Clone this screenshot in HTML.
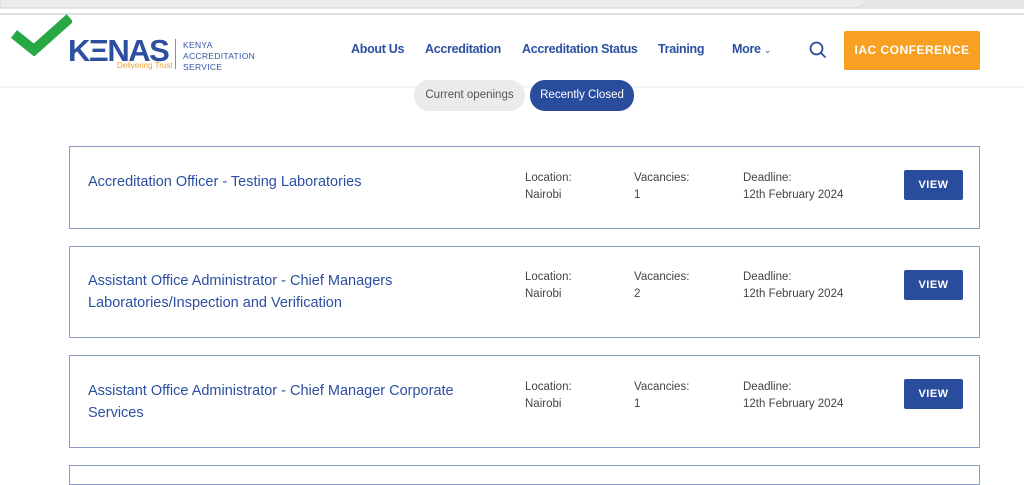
<!DOCTYPE html>
<html><head><meta charset="utf-8"><style>
*{margin:0;padding:0;box-sizing:border-box}
body{width:1024px;height:466px;overflow:hidden;background:#fff;font-family:"Liberation Sans",Arial,sans-serif;position:relative}
.abs{position:absolute}
.nav a{position:absolute;top:42px;font-size:12.5px;color:#2c4fa0;font-weight:bold;letter-spacing:-0.3px;white-space:nowrap}
.card{position:absolute;left:69px;width:911px;border:1px solid #8c9cc6;background:#fff}
.title{position:absolute;left:18px;font-size:14.5px;color:#2c4fa0;line-height:22px}
.lab{position:absolute;font-size:11.5px;color:#444;line-height:17px}
.view{position:absolute;left:834px;width:59px;height:30px;background:#2a4c9c;color:#fff;font-size:11px;font-weight:bold;text-align:center;line-height:30px;border-radius:2px;letter-spacing:.5px}
</style></head><body>
<div class="abs" style="left:0;top:0;width:1024px;height:9px;background:#e6e6e6"></div>
<div class="abs" style="left:0;top:-10px;width:868px;height:18px;background:#ececec;border-radius:0 0 12px 0;border:1px solid #ddd"></div>
<div class="abs" style="left:0;top:13px;width:1024px;height:2px;background:#ddd"></div>
<div class="abs" style="left:0;top:86px;width:1024px;height:2px;background:#eef5f8"></div>
<svg class="abs" style="left:10px;top:14px" width="62" height="42"><path d="M4 20 L24 36 L60 4" fill="none" stroke="#27a844" stroke-width="10"/></svg>
<div class="abs" style="left:68px;top:33px;font-size:31px;font-weight:bold;color:#2c4fa0;letter-spacing:-1.5px">KΞNAS</div>
<div class="abs" style="left:117px;top:61px;font-size:8px;color:#f0a030">Delivering Trust</div>
<div class="abs" style="left:175px;top:39px;width:1px;height:30px;background:#7a8cc0"></div>
<div class="abs" style="left:183px;top:40px;font-size:8.5px;color:#3355a5;line-height:11px;letter-spacing:.3px">KENYA<br>ACCREDITATION<br>SERVICE</div>
<div class="nav"><a style="left:351px">About Us</a><a style="left:425px">Accreditation</a><a style="left:522px">Accreditation Status</a><a style="left:658px">Training</a><a style="left:732px">More <span style="font-size:9px;font-weight:normal">&#8964;</span></a></div>
<svg class="abs" style="left:809px;top:41px" width="18" height="18"><circle cx="7.5" cy="7.5" r="6" fill="none" stroke="#2c4fa0" stroke-width="1.8"/><path d="M12 12 L16.5 16.5" stroke="#2c4fa0" stroke-width="1.8"/></svg>
<div class="abs" style="left:844px;top:31px;width:136px;height:39px;background:#f7a021;border-radius:2px;color:#fff;font-size:12px;font-weight:bold;text-align:center;line-height:39px;letter-spacing:.5px">IAC CONFERENCE</div>
<div class="abs" style="left:414px;top:80px;width:111px;height:31px;background:#ebebeb;border-radius:15px;font-size:11.5px;color:#555;text-align:center;line-height:31px">Current openings</div>
<div class="abs" style="left:530px;top:80px;width:104px;height:31px;background:#2a4c9c;border-radius:15px;font-size:11.5px;color:#fff;text-align:center;line-height:31px">Recently Closed</div>

<div class="card" style="top:146px;height:83px">
<div class="title" style="top:24px">Accreditation Officer - Testing Laboratories</div>
<div class="lab" style="left:455px;top:23px">Location:<br>Nairobi</div>
<div class="lab" style="left:564px;top:23px">Vacancies:<br>1</div>
<div class="lab" style="left:673px;top:23px">Deadline:<br>12th February 2024</div>
<div class="view" style="top:23px">VIEW</div>
</div>
<div class="card" style="top:246px;height:92px">
<div class="title" style="top:23px">Assistant Office Administrator - Chief Managers<br>Laboratories/Inspection and Verification</div>
<div class="lab" style="left:455px;top:22px">Location:<br>Nairobi</div>
<div class="lab" style="left:564px;top:22px">Vacancies:<br>2</div>
<div class="lab" style="left:673px;top:22px">Deadline:<br>12th February 2024</div>
<div class="view" style="top:23px">VIEW</div>
</div>
<div class="card" style="top:355px;height:93px">
<div class="title" style="top:24px">Assistant Office Administrator - Chief Manager Corporate<br>Services</div>
<div class="lab" style="left:455px;top:23px">Location:<br>Nairobi</div>
<div class="lab" style="left:564px;top:23px">Vacancies:<br>1</div>
<div class="lab" style="left:673px;top:23px">Deadline:<br>12th February 2024</div>
<div class="view" style="top:23px">VIEW</div>
</div>
<div class="card" style="top:465px;height:20px"></div>
</body></html>
